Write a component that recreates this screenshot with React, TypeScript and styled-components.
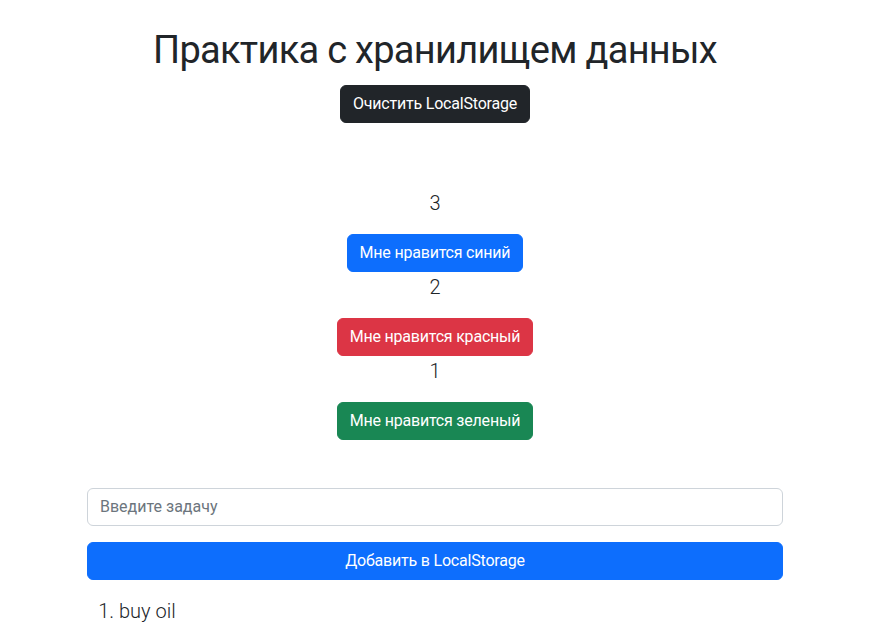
import React from "react";
import styled, { createGlobalStyle } from "styled-components";

const Global = createGlobalStyle`
  html, body { margin: 0; padding: 0; background: #fff; }
  body {
    font-family: Roboto, "Noto Sans", sans-serif;
    color: #212529;
    font-size: 16px;
    line-height: 1.5;
  }
  * { box-sizing: border-box; }
`;

const Page = styled.div`
  padding-right: 18px;
`;

const Container = styled.div`
  max-width: 720px;
  margin: 0 auto;
  padding: 26px 12px 40px;
`;

const Title = styled.h1`
  font-size: 38px;
  font-weight: 400;
  letter-spacing: -0.7px;
  line-height: 48px;
  margin: 0 0 11px;
  text-align: center;
`;

const Center = styled.div`
  text-align: center;
`;

const colors = { dark: "#212529", primary: "#0d6efd", danger: "#dc3545", success: "#198754" };

const Btn = styled.button<{ $variant: keyof typeof colors; $block?: boolean }>`
  display: ${(p) => (p.$block ? "block" : "inline-block")};
  width: ${(p) => (p.$block ? "100%" : "auto")};
  font-family: inherit;
  font-size: 16px;
  line-height: 1.5;
  font-weight: 400;
  letter-spacing: -0.2px;
  padding: 6px 12px;
  border-radius: 6px;
  color: #fff;
  cursor: pointer;
  border: 1px solid ${(p) => colors[p.$variant]};
  background: ${(p) => colors[p.$variant]};
`;

const Votes = styled.div`
  margin-top: 65px;
  text-align: center;
`;

const Count = styled.p`
  font-size: 20px;
  font-weight: 300;
  line-height: 1.5;
  margin: 0 0 16px;
`;

const Form = styled.div`
  margin-top: 48px;
  display: flex;
  flex-direction: column;
  gap: 16px;
`;

const Input = styled.input`
  display: block;
  width: 100%;
  font-family: inherit;
  font-size: 16px;
  line-height: 1.5;
  padding: 6px 12px;
  border: 1px solid #ced4da;
  border-radius: 6px;
  color: #212529;
  &::placeholder { color: #6c757d; }
`;

const List = styled.ol`
  margin: 16px 0 16px;
  padding-left: 32px;
`;

const Item = styled.li`
  font-size: 20px;
  font-weight: 300;
  line-height: 1.5;
`;

export default function App() {
  return (
    <Page>
      <Global />
      <Container>
        <Title>Практика с хранилищем данных</Title>
        <Center>
          <Btn $variant="dark">Очистить LocalStorage</Btn>
        </Center>
        <Votes>
          <Count>3</Count>
          <Btn $variant="primary">Мне нравится синий</Btn>
          <Count>2</Count>
          <Btn $variant="danger">Мне нравится красный</Btn>
          <Count>1</Count>
          <Btn $variant="success">Мне нравится зеленый</Btn>
        </Votes>
        <Form>
          <Input placeholder="Введите задачу" />
          <Btn $variant="primary" $block>
            Добавить в LocalStorage
          </Btn>
        </Form>
        <List>
          <Item>buy oil</Item>
        </List>
      </Container>
    </Page>
  );
}
